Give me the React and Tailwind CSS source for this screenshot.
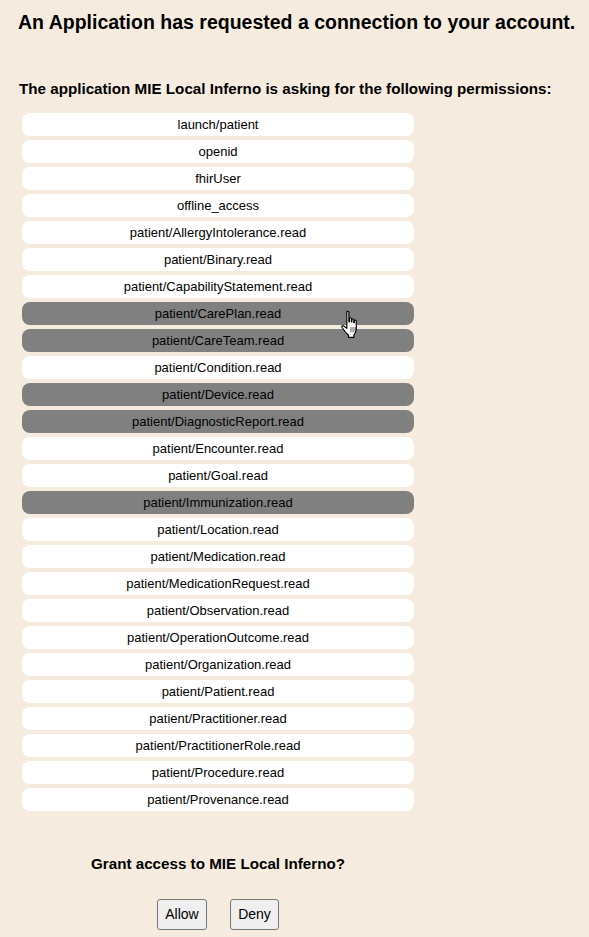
const scopes = [
  ['launch/patient', false],
  ['openid', false],
  ['fhirUser', false],
  ['offline_access', false],
  ['patient/AllergyIntolerance.read', false],
  ['patient/Binary.read', false],
  ['patient/CapabilityStatement.read', false],
  ['patient/CarePlan.read', true],
  ['patient/CareTeam.read', true],
  ['patient/Condition.read', false],
  ['patient/Device.read', true],
  ['patient/DiagnosticReport.read', true],
  ['patient/Encounter.read', false],
  ['patient/Goal.read', false],
  ['patient/Immunization.read', true],
  ['patient/Location.read', false],
  ['patient/Medication.read', false],
  ['patient/MedicationRequest.read', false],
  ['patient/Observation.read', false],
  ['patient/OperationOutcome.read', false],
  ['patient/Organization.read', false],
  ['patient/Patient.read', false],
  ['patient/Practitioner.read', false],
  ['patient/PractitionerRole.read', false],
  ['patient/Procedure.read', false],
  ['patient/Provenance.read', false],
]

// mouse pointer captured in the screenshot
function HandCursor() {
  return (
    <svg className="absolute left-[339px] top-[309px]" width="26" height="31" viewBox="0 0 20 24">
      <path
        d="M6 2.5c0-1 1.6-1 1.6 0V10h.4V7.5c0-1 1.5-1 1.5 0V10h.4V8.3c0-1 1.5-1 1.5 0V10.5h.4V9.3c0-1 1.5-1 1.5 0v6.2c0 2.2-.8 3.5-1.8 4.8v1.7H7.2v-1.7C5.8 19 3.6 16.2 2.3 14.3c-.6-.9.4-1.9 1.3-1.2L6 15V2.5z"
        fill="#fff"
        stroke="#000"
        strokeWidth="0.9"
        strokeLinejoin="round"
      />
      <path d="M9.2 14v4M10.8 14v4M12.4 14v4" stroke="#000" strokeWidth="0.5" />
    </svg>
  )
}

export default function App() {
  return (
    <div className="relative min-h-[937px] bg-[#f5ecdf] text-black font-['Liberation_Sans',Arial,sans-serif] pt-[10px]">
      <h1 className="text-[19.5px] font-bold leading-[24px] pl-[18px] whitespace-nowrap">
        An Application has requested a connection to your account.
      </h1>

      <h2 className="text-[15.2px] font-bold leading-[18px] pl-[19px] mt-[46px] whitespace-nowrap">
        The application MIE Local Inferno is asking for the following permissions:
      </h2>

      <div className="ml-[22px] w-[392px] mt-[15px] flex flex-col gap-[4px]">
        {scopes.map(([name, selected]) => (
          <div
            key={name}
            className={
              'h-[23px] rounded-[8px] flex items-center justify-center text-[13px] ' +
              (selected ? 'bg-[#808080]' : 'bg-white')
            }
          >
            {name}
          </div>
        ))}
      </div>

      <div className="ml-[22px] w-[392px] flex flex-col items-center">
        <p className="text-[15.2px] font-bold leading-[18px] mt-[44px] whitespace-nowrap">
          Grant access to MIE Local Inferno?
        </p>
        <div className="flex gap-[23px] mt-[26px]">
          <button className="w-[50px] h-[31px] text-[14px] bg-[#efefef] border border-[#767676] rounded-[3px]">
            Allow
          </button>
          <button className="w-[49px] h-[31px] text-[14px] bg-[#efefef] border border-[#767676] rounded-[3px]">
            Deny
          </button>
        </div>
      </div>

      <HandCursor />
    </div>
  )
}
